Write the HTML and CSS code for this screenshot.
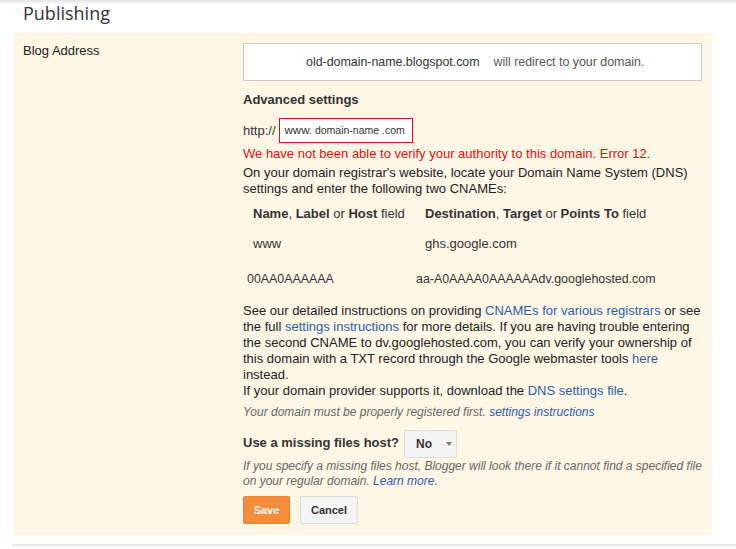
FILE: index.html
```html
<!DOCTYPE html>
<html lang="en">
<head>
    <meta charset="UTF-8">
    <title>Publishing</title>
    <link rel="stylesheet" href="styles.css">
</head>
<body>
    <div class="topshadow"></div>
    <h1 class="title">Publishing</h1>

    <div class="panel">
        <div class="label">Blog Address</div>
        <div class="content">
            <div class="redirect">
                <span class="olddomain">old-domain-name.blogspot.com</span>
                <span class="willredirect">will redirect to your domain.</span>
            </div>

            <p class="subhead">Advanced settings</p>

            <div class="httprow">
                <span>http://</span>
                <div class="domaininput"><span class="www">www.</span> domain-name .com</div>
            </div>

            <p class="error">We have not been able to verify your authority to this domain. Error 12.</p>
            <p class="text">On your domain registrar's website, locate your Domain Name System (DNS) settings and enter the following two CNAMEs:</p>

            <div class="cnames">
                <div><b>Name</b>, <b>Label</b> or <b>Host</b> field</div>
                <div><b>Destination</b>, <b>Target</b> or <b>Points To</b> field</div>
            </div>
            <div class="cnames row1">
                <div>www</div>
                <div>ghs.google.com</div>
            </div>
            <div class="cnames row2">
                <div>00AA0AAAAAA</div>
                <div>aa-A0AAAA0AAAAAAdv.googlehosted.com</div>
            </div>

            <p class="text help">See our detailed instructions on providing <a href="#">CNAMEs for various registrars</a> or see the full <a href="#">settings instructions</a> for more details. If you are having trouble entering the second CNAME to dv.googlehosted.com, you can verify your ownership of this domain with a TXT record through the Google webmaster tools <a href="#">here</a> instead.<br>If your domain provider supports it, download the <a href="#">DNS settings file</a>.</p>

            <p class="note">Your domain must be properly registered first. <a href="#">settings instructions</a></p>

            <div class="hostrow">
                <span class="subhead">Use a missing files host?</span>
                <div class="dropdown">No <span class="arrow"></span></div>
            </div>
            <p class="note hostnote">If you specify a missing files host, Blogger will look there if it cannot find a specified file on your regular domain. <a href="#">Learn more.</a></p>

            <div class="buttons">
                <button class="save">Save</button>
                <button class="cancel">Cancel</button>
            </div>
        </div>
    </div>
    <div class="bottomline"></div>
</body>
</html>
```

FILE: styles.css
```css
body{
    margin: 0;
    font-family: "Liberation Sans", Arial, sans-serif;
    font-size: 13px;
    color: #222;
    background: #fff;
}
.topshadow{
    height: 5px;
    background: linear-gradient(#e4e4e4, #fff);
}
.title{
    margin: 0;
    height: 28px;
    padding-left: 23px;
    font-family: "Open Sans", sans-serif;
    font-size: 18px;
    font-weight: normal;
    line-height: 16px;
    color: #333;
}
.panel{
    margin-left: 13px;
    width: 700px;
    background-color: #fef7e6;
    display: flex;
    padding: 10px 0 11px 0;
}
.label{
    width: 220px;
    padding-left: 10px;
    line-height: 16px;
}
.content{
    width: 459px;
}
p{
    margin: 0;
}
a{
    color: #2a5db0;
    text-decoration: none;
}
.redirect{
    height: 36px;
    background: #fff;
    border: 1px solid #c9c9c9;
    display: flex;
    align-items: center;
    padding-left: 62px;
    font-size: 12.4px;
}
.olddomain{
    color: #333;
}
.willredirect{
    color: #555;
    margin-left: 14px;
}
.subhead{
    font-weight: bold;
    color: #333;
    line-height: 16px;
}
p.subhead{
    margin-top: 11px;
}
.httprow{
    display: flex;
    align-items: center;
    margin-top: 10px;
    color: #333;
}
.domaininput{
    margin-left: 3px;
    width: 127px;
    height: 23px;
    border: 1px solid #d11;
    background: #fff;
    font-size: 10.5px;
    line-height: 23px;
    padding-left: 5px;
    color: #333;
    white-space: nowrap;
    overflow: hidden;
}
.www{
    font-size: 11.5px;
}
.error{
    color: #dd1111;
    margin-top: 3px;
    line-height: 16px;
}
.text{
    line-height: 16px;
    color: #222;
    margin-top: 3px;
}
.cnames{
    display: grid;
    grid-template-columns: 172px auto;
    padding-left: 10px;
    margin-top: 9px;
    line-height: 16px;
    color: #333;
}
.row1{
    margin-top: 14px;
}
.row2{
    grid-template-columns: 169px auto;
    padding-left: 4px;
    margin-top: 19px;
    font-size: 12.4px;
}
.help{
    margin-top: 16px;
    line-height: 16px;
}
.note{
    font-style: italic;
    color: #666;
    font-size: 12px;
    margin-top: 6px;
    line-height: 15px;
}
.hostrow{
    display: flex;
    align-items: center;
    margin-top: 7px;
}
.dropdown{
    margin-left: 5px;
    width: 53px;
    height: 28px;
    box-sizing: border-box;
    border: 1px solid #ddd;
    background: #f3f3f3;
    display: flex;
    align-items: center;
    padding-left: 11px;
    font-weight: bold;
    font-size: 12px;
    color: #333;
    margin-top: 3px;
}
.arrow{
    margin-left: 14px;
    border-left: 3px solid transparent;
    border-right: 3px solid transparent;
    border-top: 4px solid #777;
}
.hostnote{
    margin-top: 1px;
}
.buttons{
    display: flex;
    gap: 10px;
    margin-top: 7px;
}
button{
    height: 28px;
    border-radius: 2px;
    font-family: "Liberation Sans", Arial, sans-serif;
    font-size: 11px;
    font-weight: bold;
    padding: 0;
}
.save{
    width: 47px;
    background: #f58c3a;
    border: 1px solid #ea8131;
    color: #fff;
}
.cancel{
    width: 58px;
    background: #f4f4f4;
    border: 1px solid #d9d9d9;
    color: #333;
}
.bottomline{
    margin-left: 12px;
    margin-top: 9px;
    height: 2px;
    background: #e8e8e8;
}
```
